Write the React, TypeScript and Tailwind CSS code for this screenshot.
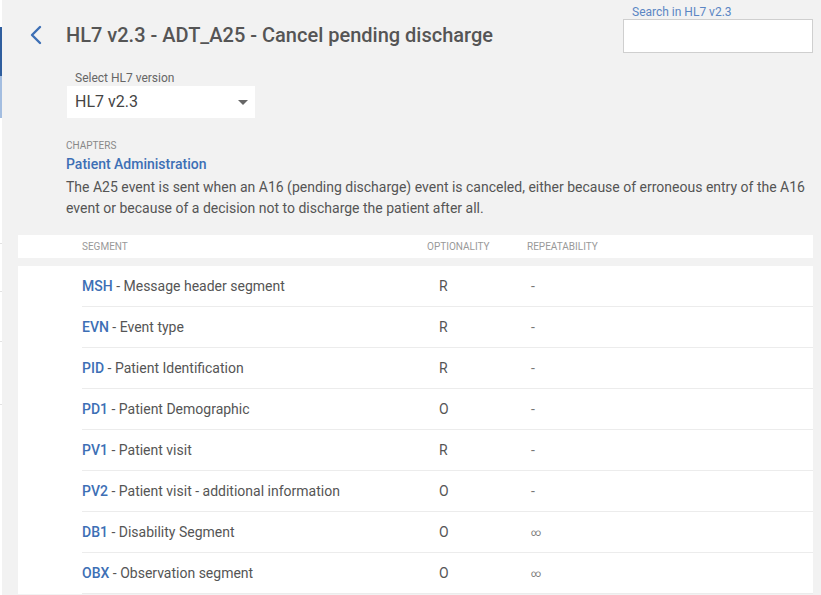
import React from 'react';

const segments = [
  { code: 'MSH', name: 'Message header segment', opt: 'R', rep: '-' },
  { code: 'EVN', name: 'Event type', opt: 'R', rep: '-' },
  { code: 'PID', name: 'Patient Identification', opt: 'R', rep: '-' },
  { code: 'PD1', name: 'Patient Demographic', opt: 'O', rep: '-' },
  { code: 'PV1', name: 'Patient visit', opt: 'R', rep: '-' },
  { code: 'PV2', name: 'Patient visit - additional information', opt: 'O', rep: '-' },
  { code: 'DB1', name: 'Disability Segment', opt: 'O', rep: '∞' },
  { code: 'OBX', name: 'Observation segment', opt: 'O', rep: '∞' },
];

const App: React.FC = () => {
  return (
    <div className="flex h-[595px] w-[821px] overflow-hidden bg-[#f2f2f2] font-['Roboto',sans-serif]">
      {/* sidebar edge */}
      <div className="flex w-[2px] shrink-0 flex-col bg-white">
        <div className="h-[27px]" />
        <div className="h-[49px] bg-[#2f5e9e]" />
        <div className="h-[42px] bg-[#a3bde0]" />
        <div className="h-[126px] border-b border-[#e2e2e2]" />
        <div className="h-[48px] border-b border-[#e2e2e2]" />
        <div className="h-[50px] border-b border-[#e2e2e2]" />
        <div className="h-[63px] border-b border-[#e2e2e2]" />
      </div>

      <div className="flex-1 pr-2">
        {/* header */}
        <div className="flex items-start justify-between">
          <div className="flex items-center pt-[20px]">
            <button className="ml-[22px] flex h-6 w-6 items-center justify-center text-[#3d6fb5]">
              <svg width="14" height="20" viewBox="0 0 14 20" fill="none">
                <path d="M11 2 L3 10 L11 18" stroke="currentColor" strokeWidth="2.4" strokeLinecap="round" strokeLinejoin="round" />
              </svg>
            </button>
            <h1 className="ml-[18px] text-[20px] font-medium text-[#555]">
              HL7 v2.3 - ADT_A25 - Cancel pending discharge
            </h1>
          </div>
          <div className="pt-[5px]">
            <label className="block pl-[9px] text-[12px] leading-[14px] text-[#5b86c4]">Search in HL7 v2.3</label>
            <input
              type="text"
              className="h-[34px] w-[190px] border border-[#cfcfcf] bg-white focus:outline-none"
            />
          </div>
        </div>

        {/* version select */}
        <div className="ml-[65px] mt-[18px] w-[188px]">
          <div className="pl-2 text-[12px] leading-[14px] text-[#666]">Select HL7 version</div>
          <div className="mt-[1px] flex h-[32px] items-center justify-between bg-white pl-2 pr-[7px]">
            <span className="text-[16px] text-[#444]">HL7 v2.3</span>
            <svg width="10" height="5" viewBox="0 0 10 5">
              <path d="M0 0 L10 0 L5 5 Z" fill="#666" />
            </svg>
          </div>
        </div>

        {/* chapter */}
        <div className="ml-[64px] mt-[22px]">
          <div className="text-[10px] uppercase leading-[12px] text-[#888]">Chapters</div>
          <div className="mt-[3px] text-[14px] font-medium leading-[18px] text-[#3d6fb5]">Patient Administration</div>
          <p className="mt-[4px] text-[14px] leading-[21px] text-[#555]">
            The A25 event is sent when an A16 (pending discharge) event is canceled, either because of erroneous entry of the A16
            event or because of a decision not to discharge the patient after all.
          </p>
        </div>

        {/* table */}
        <div className="ml-4 mt-[16px]">
          <div className="flex h-[23px] items-center bg-white text-[10px] uppercase text-[#999]">
            <div className="w-[409px] pl-16">Segment</div>
            <div className="w-[100px]">Optionality</div>
            <div>Repeatability</div>
          </div>
          <div className="mt-2 bg-white">
            {segments.map((s) => (
              <div key={s.code} className="ml-16 flex h-[41px] items-center border-b border-[#ececec] text-[14px]">
                <div className="w-[345px] text-[#555]">
                  <span className="font-medium text-[#3d6fb5]">{s.code}</span> - {s.name}
                </div>
                <div className="w-[104px] pl-[12px] text-[#555]">{s.opt}</div>
                <div className={s.rep === '-' ? 'text-[#777]' : 'text-[10px] text-[#777]'}>{s.rep}</div>
              </div>
            ))}
          </div>
        </div>
      </div>
    </div>
  );
};

export default App;
